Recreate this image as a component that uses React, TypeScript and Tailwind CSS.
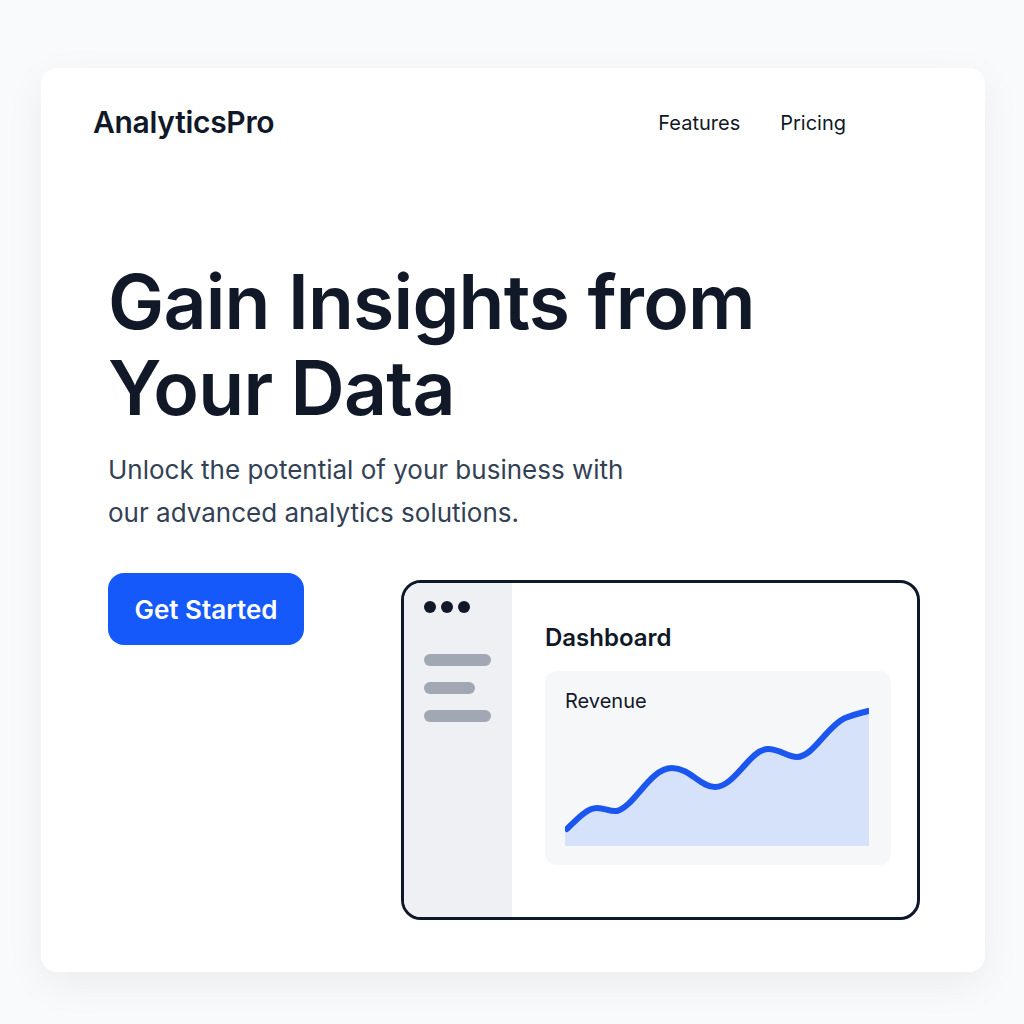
import React from 'react';

function RevenueChart() {
  const line =
    'M2 123 C12 113, 22 102, 32 102 C40 102, 45 106, 52 105 C70 100, 85 62, 107 62 C125 62, 135 81, 150 81 C170 81, 185 43, 203 43 C215 43, 222 51, 232 51 C248 51, 262 20, 280 12 C290 8, 296 7, 303 5';
  return (
    <svg width="304" height="140" viewBox="0 0 304 140" className="block">
      <path d={`${line} L304 5 L304 140 L0 140 L0 123 Z`} fill="#d5e2f9" />
      <path d={line} fill="none" stroke="#1b57ee" strokeWidth="6" strokeLinecap="round" strokeLinejoin="round" />
    </svg>
  );
}

function DashboardMock() {
  return (
    <div className="mt-[7px] ml-[97px] flex h-[340px] w-[519px] overflow-hidden rounded-[20px] border-[3px] border-[#0f172a] bg-white">
      <div className="w-[108px] shrink-0 bg-[#eef0f4] pl-5 pt-[18px]">
        <div className="flex gap-[5px]">
          <span className="h-3 w-3 rounded-full bg-[#111827]" />
          <span className="h-3 w-3 rounded-full bg-[#111827]" />
          <span className="h-3 w-3 rounded-full bg-[#111827]" />
        </div>
        <div className="mt-[41px] flex flex-col gap-[16px]">
          <span className="h-3 w-[67px] rounded-full bg-[#a1a7b3]" />
          <span className="h-3 w-[51px] rounded-full bg-[#a1a7b3]" />
          <span className="h-3 w-[67px] rounded-full bg-[#a1a7b3]" />
        </div>
      </div>
      <div className="flex-1 pl-[33px] pt-[39px]">
        <h3 className="text-[24px] font-semibold leading-8 text-[#111827]">Dashboard</h3>
        <div className="mt-[17px] h-[194px] w-[346px] rounded-xl bg-[#f6f7f9] px-5 pt-[18px]">
          <p className="text-[20px] leading-6 text-[#111827]">Revenue</p>
          <div className="mt-[-7px]">
            <RevenueChart />
          </div>
        </div>
      </div>
    </div>
  );
}

export default function App() {
  return (
    <div className="min-h-[1024px] bg-[#f9fafb] pt-[68px] font-['Inter',sans-serif]">
      <div className="ml-[41px] h-[904px] w-[944px] rounded-2xl bg-white shadow-[0_12px_40px_rgba(15,23,42,0.06)]">
        <header className="flex items-center justify-between pl-[52px] pr-[139px] pt-[32px]">
          <span className="text-[30px] font-semibold tracking-[-0.01em] text-[#111827]">AnalyticsPro</span>
          <nav className="flex gap-[40px] text-[20px] text-[#111827]">
            <a href="#features">Features</a>
            <a href="#pricing">Pricing</a>
          </nav>
        </header>

        <section className="pl-[67px] pt-[114px]">
          <h1 className="text-[75px] font-semibold leading-[86px] tracking-[-0.01em] text-[#111827]">
            Gain Insights from
            <br />
            Your Data
          </h1>
          <p className="mt-[17px] text-[26px] leading-[43px] text-[#334155]">
            Unlock the potential of your business with
            <br />
            our advanced analytics solutions.
          </p>
          <div className="mt-[39px] flex items-start">
            <button className="h-[72px] w-[196px] rounded-2xl bg-[#1559fb] text-[26px] font-semibold text-white">
              Get Started
            </button>
            <DashboardMock />
          </div>
        </section>
      </div>
    </div>
  );
}
